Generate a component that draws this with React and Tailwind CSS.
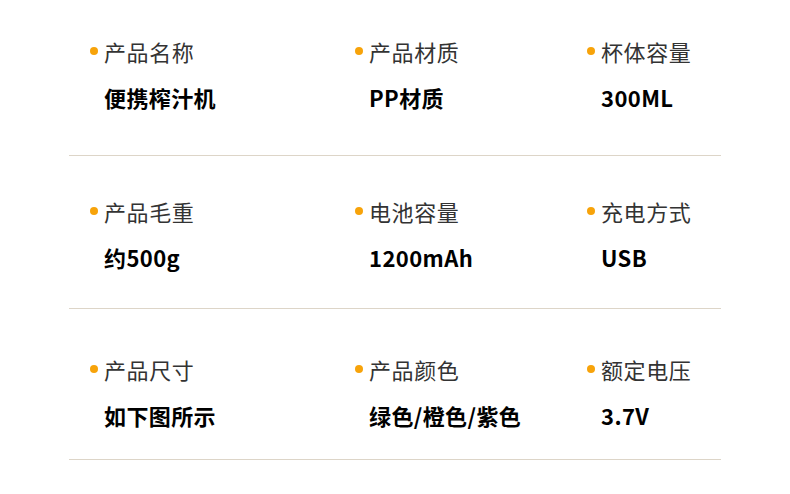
const rows = [
  {
    h: 'h-[156px]',
    pt: 'pt-[37px]',
    items: [
      { label: '产品名称', value: '便携榨汁机' },
      { label: '产品材质', value: 'PP材质' },
      { label: '杯体容量', value: '300ML' },
    ],
  },
  {
    h: 'h-[153px]',
    pt: 'pt-[41px]',
    items: [
      { label: '产品毛重', value: '约500g' },
      { label: '电池容量', value: '1200mAh' },
      { label: '充电方式', value: 'USB' },
    ],
  },
  {
    h: 'h-[151px]',
    pt: 'pt-[46px]',
    items: [
      { label: '产品尺寸', value: '如下图所示' },
      { label: '产品颜色', value: '绿色/橙色/紫色' },
      { label: '额定电压', value: '3.7V' },
    ],
  },
];

const Spec = ({ label, value }) => (
  <div className="flex flex-col gap-[18px]">
    <div className="flex items-center h-[28px]">
      <span className="w-[8px] h-[8px] rounded-full bg-[#f7a30a] mr-[6px] shrink-0" />
      <span className="text-[22px] tracking-[0.6px] leading-[28px] text-[#333333]">{label}</span>
    </div>
    <div className="h-[28px] pl-[14px] text-[22px] tracking-[0.4px] leading-[28px] font-bold text-black">
      {value}
    </div>
  </div>
);

export default function App() {
  return (
    <div
      className="w-[790px] h-[494px] bg-white overflow-hidden"
      style={{ fontFamily: '"Noto Sans CJK SC", "Noto Sans", sans-serif' }}
    >
      <div className="ml-[69px] w-[652px]">
        {rows.map((row, i) => (
          <div
            key={i}
            className={`${row.h} ${row.pt} border-b border-[#ddd5c8] grid grid-cols-[265px_232px_1fr] pl-[21px] box-border`}
          >
            {row.items.map((it) => (
              <Spec key={it.label} {...it} />
            ))}
          </div>
        ))}
      </div>
    </div>
  );
}
